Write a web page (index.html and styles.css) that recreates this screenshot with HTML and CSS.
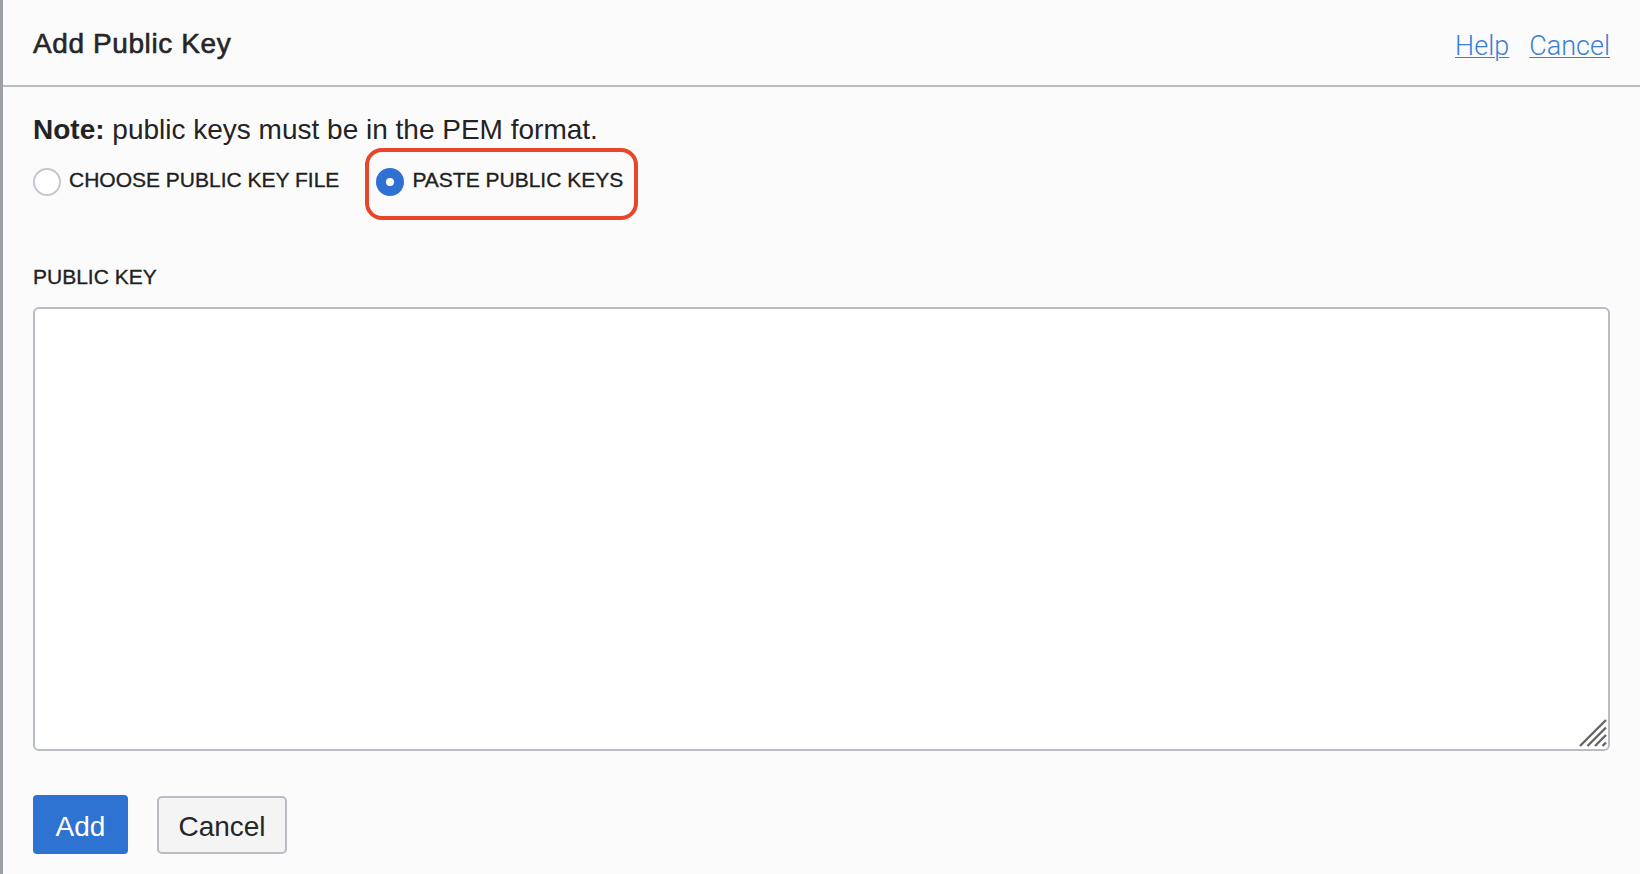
FILE: index.html
```html
<!DOCTYPE html>
<html lang="en">
<head>
<meta charset="utf-8">
<title>Add Public Key</title>
<link rel="stylesheet" href="styles.css">
</head>
<body>
<div class="dialog">
  <header class="dlg-header">
    <h1 class="dlg-title">Add Public Key</h1>
    <nav class="dlg-links">
      <a href="#" class="dlg-link">Help</a>
      <a href="#" class="dlg-link">Cancel</a>
    </nav>
  </header>
  <main class="dlg-body">
    <p class="note"><strong>Note:</strong> public keys must be in the PEM format.</p>
    <div class="source-row">
      <label class="option option-first"><span class="radio"></span><span class="option-text">CHOOSE PUBLIC KEY FILE</span></label>
      <div class="highlight">
        <label class="option"><span class="radio radio-checked"></span><span class="option-text">PASTE PUBLIC KEYS</span></label>
      </div>
    </div>
    <div class="field-label">PUBLIC KEY</div>
    <div class="textarea-wrap">
      <textarea class="key-input"></textarea>
      <svg class="grip" width="28" height="28" viewBox="0 0 28 28" aria-hidden="true">
        <line x1="1" y1="27" x2="27" y2="1"/>
        <line x1="8.5" y1="27" x2="27" y2="8.5"/>
        <line x1="16" y1="27" x2="27" y2="16"/>
        <line x1="23.5" y1="27" x2="27" y2="23.5"/>
      </svg>
    </div>
    <div class="actions">
      <button class="btn btn-primary" type="button">Add</button>
      <button class="btn btn-secondary" type="button">Cancel</button>
    </div>
  </main>
</div>
</body>
</html>
```

FILE: styles.css
```css
html, body {
  margin: 0;
  padding: 0;
  height: 100%;
  overflow: hidden;
}

body {
  font-family: "Liberation Sans", Arial, sans-serif;
  color: #232323;
  background: #fbfbfb;
}

.dialog {
  min-height: 100vh;
  box-sizing: border-box;
  border-left: 3px solid #9da0a5;
  background: #fbfbfb;
}

.dlg-header {
  height: 87px;
  box-sizing: border-box;
  border-bottom: 2px solid #b8bcc3;
  padding: 0 30px;
  display: flex;
  justify-content: space-between;
  align-items: flex-start;
}

.dlg-title {
  margin: 28px 0 0;
  font-size: 28px;
  line-height: 32px;
  font-weight: 400;
  letter-spacing: 0.6px;
  -webkit-text-stroke: 0.6px #262626;
  color: #262626;
}

.dlg-links {
  margin-top: 30px;
  display: flex;
  gap: 20px;
}

.dlg-link {
  font-family: Roboto, "Liberation Sans", sans-serif;
  font-weight: 300;
  font-size: 27px;
  line-height: 32px;
  color: #3a7fd6;
  text-decoration: underline;
  text-decoration-thickness: 1px;
  text-underline-offset: 2px;
}

.dlg-body {
  padding: 0 30px;
}

.note {
  margin: 26px 0 0;
  font-size: 28px;
  line-height: 33px;
  color: #232323;
}

.note strong {
  font-weight: 700;
}

.source-row {
  margin-top: 2px;
  display: flex;
  align-items: flex-start;
}

.option {
  display: inline-flex;
  align-items: center;
  gap: 8px;
}

.option-first {
  margin-top: 18px;
}

.option-text {
  font-size: 21px;
  line-height: 28px;
  margin-bottom: 4px;
  color: #1f1f1f;
  -webkit-text-stroke: 0.35px #1f1f1f;
  white-space: nowrap;
}

.radio {
  width: 28px;
  height: 28px;
  box-sizing: border-box;
  border: 2px solid #c4c8cf;
  border-radius: 50%;
  background: #fff;
  display: flex;
  align-items: center;
  justify-content: center;
  flex: none;
}

.radio-checked {
  background: #2f71d2;
  border-color: #2f71d2;
}

.radio-checked::after {
  content: "";
  width: 8px;
  height: 8px;
  border-radius: 50%;
  background: #fff;
}

.highlight {
  margin-left: 26px;
  border: 4px solid #e8452b;
  border-radius: 17px;
  padding: 14px 11px 18px 7px;
}

.field-label {
  margin-top: 43px;
  font-size: 21px;
  line-height: 28px;
  color: #1f1f1f;
  -webkit-text-stroke: 0.35px #1f1f1f;
}

.textarea-wrap {
  position: relative;
  margin-top: 16px;
}

.key-input {
  display: block;
  width: 100%;
  height: 444px;
  box-sizing: border-box;
  border: 2px solid #b8bcc3;
  border-radius: 6px;
  background: #fff;
  resize: none;
  outline: none;
  margin: 0;
}

.grip {
  position: absolute;
  right: 3px;
  bottom: 4px;
  stroke: #666;
  stroke-width: 2.4;
}

.actions {
  margin-top: 44px;
  display: flex;
  gap: 29px;
  align-items: flex-start;
}

.btn {
  font-family: "Liberation Sans", Arial, sans-serif;
  font-size: 28px;
  line-height: 32px;
  box-sizing: border-box;
  cursor: pointer;
  padding: 4px 0 0;
  margin: 0;
}

.btn-primary {
  width: 95px;
  height: 59px;
  background: #2e72d2;
  color: #fff;
  border: none;
  border-radius: 4px;
}

.btn-secondary {
  width: 130px;
  height: 58px;
  margin-top: 1px;
  background: #f4f4f4;
  color: #262626;
  border: 2px solid #b9bdc4;
  border-radius: 5px;
}
```
